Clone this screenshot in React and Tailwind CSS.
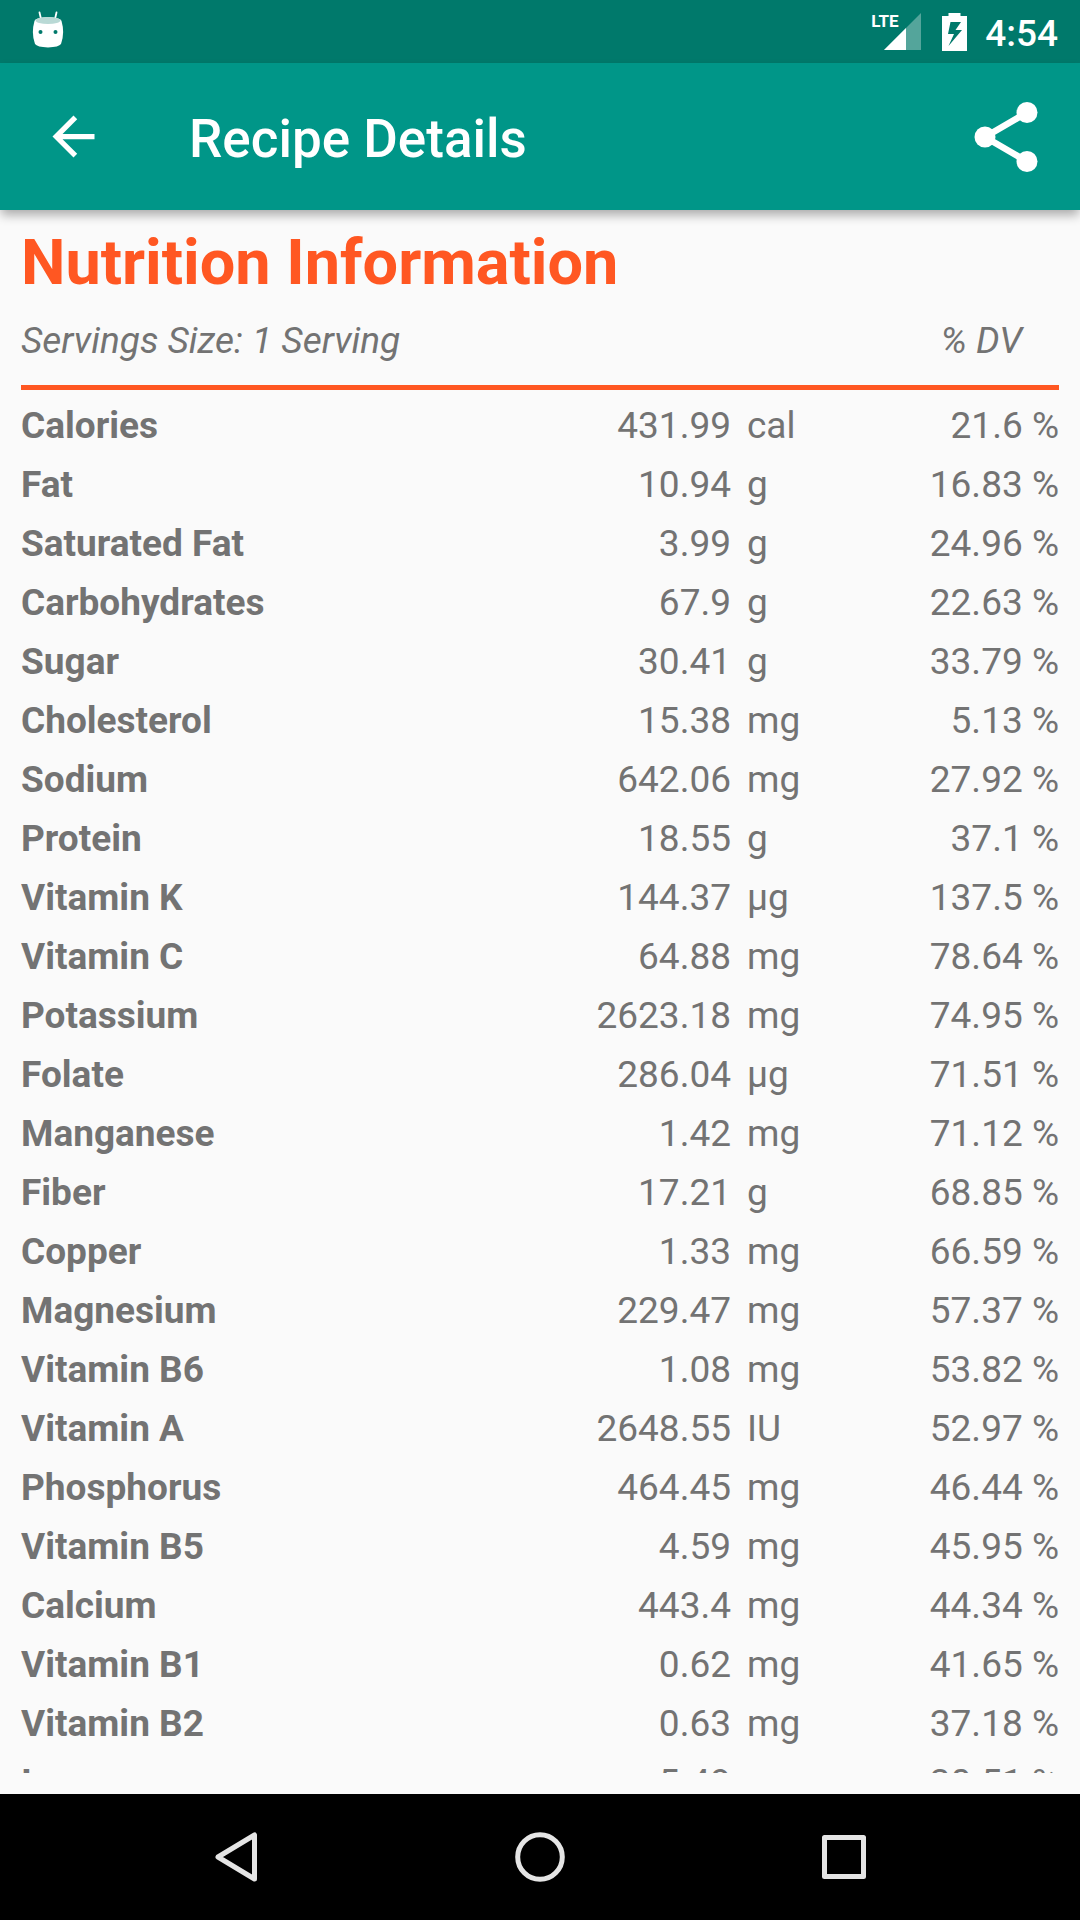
const nutrients = [
  ["Calories", "431.99", "cal", "21.6"],
  ["Fat", "10.94", "g", "16.83"],
  ["Saturated Fat", "3.99", "g", "24.96"],
  ["Carbohydrates", "67.9", "g", "22.63"],
  ["Sugar", "30.41", "g", "33.79"],
  ["Cholesterol", "15.38", "mg", "5.13"],
  ["Sodium", "642.06", "mg", "27.92"],
  ["Protein", "18.55", "g", "37.1"],
  ["Vitamin K", "144.37", "µg", "137.5"],
  ["Vitamin C", "64.88", "mg", "78.64"],
  ["Potassium", "2623.18", "mg", "74.95"],
  ["Folate", "286.04", "µg", "71.51"],
  ["Manganese", "1.42", "mg", "71.12"],
  ["Fiber", "17.21", "g", "68.85"],
  ["Copper", "1.33", "mg", "66.59"],
  ["Magnesium", "229.47", "mg", "57.37"],
  ["Vitamin B6", "1.08", "mg", "53.82"],
  ["Vitamin A", "2648.55", "IU", "52.97"],
  ["Phosphorus", "464.45", "mg", "46.44"],
  ["Vitamin B5", "4.59", "mg", "45.95"],
  ["Calcium", "443.4", "mg", "44.34"],
  ["Vitamin B1", "0.62", "mg", "41.65"],
  ["Vitamin B2", "0.63", "mg", "37.18"],
  ["Iron", "5.49", "mg", "30.51"],
];

function RobotIcon() {
  return (
    <svg viewBox="0 0 32 38" className="h-[38px] w-8" aria-hidden="true">
      <path d="M7.500 1.500 9 8M24.500 1.500 23 8" stroke="#fff" strokeWidth="1.800" strokeLinecap="round" />
      <path d="M2.500 10C4 5 28 5 29.500 10Q33 22 29 33Q27 36 16 36.500Q5 36 3 33Q-1 22 2.500 10Z" fill="#fff" />
      <ellipse cx="16" cy="9.500" rx="12.500" ry="3.500" fill="#b9d9d5" />
      <circle cx="8.500" cy="21" r="2" fill="#00796b" />
      <circle cx="23.500" cy="21" r="2" fill="#00796b" />
    </svg>
  );
}

function SignalIcon() {
  return (
    <div className="relative h-[37px] w-[46px]" role="img" aria-label="LTE signal">
      <svg viewBox="0 0 37 37" className="ml-auto size-[37px]" aria-hidden="true">
        <path d="M37 0V37H0Z" fill="#fff" fillOpacity="0.33" />
        <path d="M22 15V37H0Z" fill="#fff" />
      </svg>
      <span className="absolute top-0 -left-1 font-['Roboto',sans-serif] text-[17px] leading-4 font-bold">
        LTE
      </span>
    </div>
  );
}

function BatteryIcon() {
  return (
    <svg viewBox="0 0 25 38" className="h-[38px] w-[25px]" aria-label="Battery charging" role="img">
      <path
        fillRule="evenodd"
        fill="#fff"
        d="M6.500 0H18.500V3H25V38H0V3H6.500ZM8.500 9 6 21H12L6.500 33 20 17H13.500L19 9Z"
      />
    </svg>
  );
}

function StatusBar() {
  return (
    <div className="flex h-[63px] items-center justify-between bg-[#00796b] pr-[22px] pl-8 text-white">
      <div className="pb-1">
        <RobotIcon />
      </div>
      <div className="flex items-center">
        <SignalIcon />
        <div className="ml-[21px]">
          <BatteryIcon />
        </div>
        <time className="ml-[18px] pt-1 text-[37px] leading-[44px] font-medium">4:54</time>
      </div>
    </div>
  );
}

function AppBar() {
  return (
    <header className="relative z-10 flex h-[147px] items-center bg-[#009688] pr-[42px] pl-[42px] text-white shadow-[0_6px_10px_-1px_rgba(0,0,0,0.32)]">
      <button type="button" aria-label="Back">
        <svg viewBox="0 0 24 24" fill="currentColor" className="size-[63px]">
          <path d="M20 11H7.830l5.590-5.590L12 4l-8 8 8 8 1.410-1.410L7.830 13H20v-2z" />
        </svg>
      </button>
      <h1 className="ml-[84px] flex-1 pt-1 text-[53px] leading-[62px] font-medium">Recipe Details</h1>
      <button type="button" aria-label="Share">
        <svg viewBox="0 0 84 84" className="size-[84px]" fill="currentColor">
          <path d="M73 17.500 31 42l42 24.500" fill="none" stroke="currentColor" strokeWidth="6.500" />
          <circle cx="31" cy="42" r="10.500" />
          <circle cx="73" cy="17.500" r="10.500" />
          <circle cx="73" cy="66.500" r="10.500" />
        </svg>
      </button>
    </header>
  );
}

function NutritionTable() {
  return (
    <table className="w-full border-separate border-spacing-0 text-[37px] leading-[47px] text-[#737373]">
      <thead>
        <tr className="italic">
          <th
            scope="col"
            colSpan={3}
            className="border-b-5 border-[#ff5722] pt-[17px] pb-[21px] text-left font-normal"
          >
            Servings Size: 1 Serving
          </th>
          <th
            scope="col"
            className="border-b-5 border-[#ff5722] pt-[17px] pr-[37px] pb-[21px] text-right font-normal"
          >
            % DV
          </th>
        </tr>
      </thead>
      <tbody>
        {nutrients.map(([name, amount, unit, daily]) => (
          <tr key={name}>
            <th scope="row" className="pt-3 pb-0 text-left font-bold">
              {name}
            </th>
            <td className="pt-3 pr-4 pb-0 text-right">{amount}</td>
            <td className="w-[156px] pt-3 pb-0 text-left">{unit}</td>
            <td className="w-[156px] pt-3 pb-0 text-right">{daily} %</td>
          </tr>
        ))}
      </tbody>
    </table>
  );
}

function NavBar() {
  return (
    <nav
      aria-label="System"
      className="flex h-[126px] items-center justify-center bg-black text-[#e5e5e5]"
    >
      <button type="button" aria-label="Back" className="flex w-76 justify-center">
        <svg viewBox="0 0 56 56" className="size-14" fill="none" stroke="currentColor" strokeWidth="5">
          <path d="M46.500 6V50L10 28Z" strokeLinejoin="round" />
        </svg>
      </button>
      <button type="button" aria-label="Home" className="flex w-76 justify-center">
        <svg viewBox="0 0 56 56" className="size-14" fill="none" stroke="currentColor" strokeWidth="5">
          <circle cx="28" cy="28" r="22.300" />
        </svg>
      </button>
      <button type="button" aria-label="Overview" className="flex w-76 justify-center">
        <svg viewBox="0 0 56 56" className="size-14" fill="none" stroke="currentColor" strokeWidth="5">
          <rect x="8.500" y="8.500" width="39" height="39" strokeLinejoin="round" />
        </svg>
      </button>
    </nav>
  );
}

export default function App() {
  return (
    <div className="flex h-screen flex-col bg-[#fafafa] font-['Roboto',sans-serif]">
      <StatusBar />
      <AppBar />
      <main className="min-h-0 flex-1 px-[21px] pb-[21px]">
        <div className="h-full overflow-hidden">
          <h2 className="pt-4 text-[63px] leading-[74px] font-bold text-[#ff5722]">
            Nutrition Information
          </h2>
          <NutritionTable />
        </div>
      </main>
      <NavBar />
    </div>
  );
}
